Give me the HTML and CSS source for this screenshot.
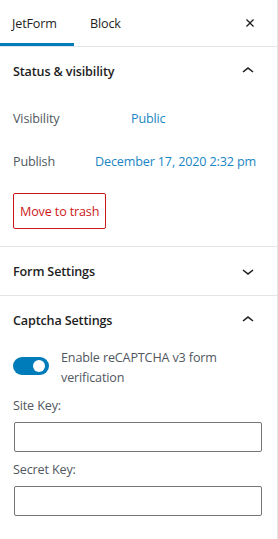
FILE: index.html
```html
<!DOCTYPE html>
<html>
<head>
<meta charset="utf-8">
<link rel="stylesheet" href="styles.css">
</head>
<body>
<div class="sidebar">
  <div class="tabs">
    <div class="tab active">JetForm</div>
    <div class="tab">Block</div>
    <div class="close">
      <svg width="20" height="20" viewBox="0 0 24 24"><path d="M12 13.06l3.71 3.71 1.06-1.06L13.06 12l3.71-3.71-1.06-1.06L12 10.94 8.29 7.23 7.23 8.29 10.94 12l-3.71 3.71 1.06 1.06L12 13.06z" fill="#1e1e1e"/></svg>
    </div>
  </div>

  <section class="panel">
    <div class="panel-head">
      <span>Status &amp; visibility</span>
      <svg class="chev" width="24" height="24" viewBox="0 0 24 24"><path d="M6.5 12.4L12 8l5.5 4.4-.9 1.2L12 10l-4.5 3.6-1-1.2z" fill="#1e1e1e"/></svg>
    </div>
    <div class="panel-body status">
      <div class="row"><span class="label">Visibility</span><span class="link vis">Public</span></div>
      <div class="row"><span class="label">Publish</span><span class="link">December 17, 2020 2:32 pm</span></div>
      <div class="trash-wrap"><button class="trash">Move to trash</button></div>
    </div>
  </section>

  <section class="panel">
    <div class="panel-head">
      <span>Form Settings</span>
      <svg class="chev" width="24" height="24" viewBox="0 0 24 24"><path d="M17.5 11.6L12 16l-5.5-4.4.9-1.2L12 14l4.5-3.6 1 1.2z" fill="#1e1e1e"/></svg>
    </div>
  </section>

  <section class="panel last">
    <div class="panel-head">
      <span>Captcha Settings</span>
      <svg class="chev" width="24" height="24" viewBox="0 0 24 24"><path d="M6.5 12.4L12 8l5.5 4.4-.9 1.2L12 10l-4.5 3.6-1-1.2z" fill="#1e1e1e"/></svg>
    </div>
    <div class="panel-body captcha">
      <div class="toggle-row">
        <span class="toggle"><span class="knob"></span></span>
        <span class="toggle-label">Enable reCAPTCHA v3 form verification</span>
      </div>
      <label class="field-label">Site Key:</label>
      <div class="input"></div>
      <label class="field-label">Secret Key:</label>
      <div class="input"></div>
    </div>
  </section>
</div>
</body>
</html>
```
FILE: styles.css
```css
* { box-sizing: border-box; }
html, body { margin: 0; padding: 0; background: #fff; }
body {
  font-family: "Open Sans", "Noto Sans", sans-serif;
  font-size: 12.6px;
  letter-spacing: -0.15px;
  color: #1e1e1e;
}
.sidebar {
  width: 278px;
  height: 539px;
  border-right: 1px solid #e2e4e7;
  overflow: hidden;
}
.tabs {
  display: flex;
  align-items: stretch;
  height: 47px;
  border-bottom: 1px solid #e2e4e7;
}
.tab {
  display: flex;
  align-items: center;
  padding: 0 12px;
  height: 46px;
  color: #1e1e1e;
}
.tab.active {
  width: 74px;
  box-shadow: inset 0 -3px 0 #007cba;
}
.tab + .tab { padding-left: 16px; }
.close {
  margin-left: auto;
  display: flex;
  align-items: center;
  padding-right: 17px;
}
.panel { border-bottom: 1px solid #e2e4e7; }
.panel.last { border-bottom: none; }
.panel-head {
  display: flex;
  align-items: center;
  justify-content: space-between;
  height: 48px;
  padding: 0 17px 0 13px;
  font-weight: 600;
}
.panel-body { padding: 0 13px 17px; }
.status { padding-top: 2px; }
.row {
  display: flex;
  align-items: center;
  height: 43px;
  white-space: nowrap;
}
.label { width: 82px; color: #50575e; }
.link { color: #1a86c4; }
.vis { margin-left: 36px; }
.trash-wrap { padding-top: 10px; }
.trash {
  display: block;
  font-family: inherit;
  font-size: inherit;
  letter-spacing: inherit;
  color: #cc1818;
  background: #fff;
  border: 1px solid #cc1818;
  border-radius: 2px;
  height: 36px;
  padding: 0 6px;
}
.captcha { padding-top: 4px; }
.toggle-row { display: flex; align-items: flex-start; gap: 12px; }
.toggle {
  position: relative;
  flex: none;
  width: 36px;
  height: 18px;
  border-radius: 9px;
  background: #007cba;
  margin-top: 9px;
}
.knob {
  position: absolute;
  right: 4px;
  top: 3px;
  width: 12px;
  height: 12px;
  border-radius: 50%;
  background: #fff;
}
.toggle-label { color: #50575e; line-height: 20px; }
.field-label {
  display: block;
  color: #50575e;
  margin-top: 8px;
  line-height: 20px;
}
.input {
  margin: 6px 0 0 1px;
  width: 248px;
  height: 30px;
  border: 1px solid #757575;
  border-radius: 2px;
}
```
